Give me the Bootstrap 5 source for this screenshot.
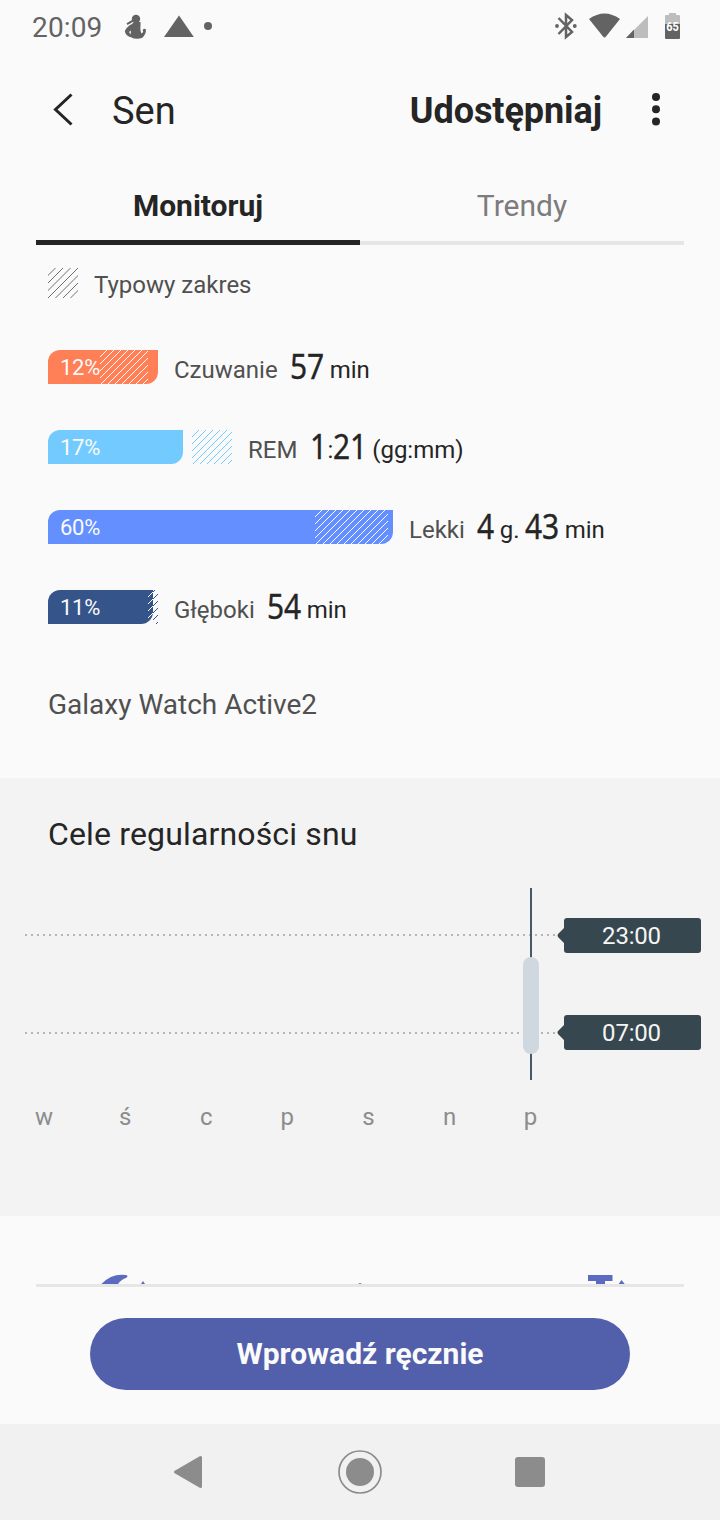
<!DOCTYPE html>
<html lang="pl">
<head>
<meta charset="utf-8">
<meta name="viewport" content="width=device-width, initial-scale=1">
<title>Sen</title>
<link href="https://cdn.jsdelivr.net/npm/bootstrap@5.3.0/dist/css/bootstrap.min.css" rel="stylesheet">
<style>
body{width:720px;height:1520px;overflow:hidden;background:#fafafa;color:#252525;font-family:Roboto,sans-serif;font-size:24px;line-height:40px}
svg{display:block;flex:none}
.status-row{height:54px;padding-left:32px;font-size:28px;color:#636363}
.status-row span{width:71px;padding-top:2px;letter-spacing:.15px}
.app-head{height:114px;padding:0 60px 2px 52px}
.app-title{font-size:38px;margin-left:38px;padding-top:2px}
.app-share{font-size:36px;font-weight:700;padding-top:2px;letter-spacing:-.08px}
.tab-row{height:77px;margin:0 36px;font-size:30px}
.tab-row .nav-link{padding:0;height:77px;line-height:75px;color:#7c7c7c;border-radius:0;box-shadow:inset 0 -4px #e6e6e6}
.tab-row .nav-link.active{color:#252525;font-weight:700;box-shadow:inset 0 -5px #252525}
.stage-panel{height:533px;padding:23px 48px 0}
.legend-row{height:30px;margin-bottom:52px;color:#505050}
.stage{height:34px;margin-bottom:46px}
.stage-graph{position:relative;height:34px;flex:none}
.stage-bar{height:34px;border-radius:12px 0;padding-left:12px;color:#fafafa;font-size:22px;line-height:35px;letter-spacing:-.3px}
.stage-graph svg{position:absolute;top:0}
.stage-text{margin-left:16px;height:34px;white-space:nowrap}
.stage-name{color:#505050;margin-right:12px}
.num{display:inline-block;font-family:"Noto Sans",sans-serif;font-size:34px;line-height:30px;transform:translateY(1px) scaleX(.88);transform-origin:0 50%;-webkit-text-stroke:.35px}
.n1{width:17px}.n2{width:34px}
.device{font-size:28px;color:#505050;margin-top:61px}
.goal-panel{height:438px;background:#f3f3f3;padding-top:36px}
.goal-panel h2{font-size:32px;line-height:40px;font-weight:400;margin:0 48px 34px;letter-spacing:.15px}
.goal-tag{width:145px;height:35px;padding-left:4px;text-align:center;line-height:36px;color:#f5f5f5;background:#37474f;letter-spacing:-.2px;clip-path:path("M10 0H141Q144 0 144 3V32Q144 35 141 35H10Q7 35 7 32V25L1 19Q0 17.500 1 16L7 10V3Q7 0 10 0Z")}
.days{padding-left:3.500px;color:#8c8c8c;margin-top:17px}
.days span{width:81.100px;text-align:center}
.peek{height:68px;padding-top:56px}
.foot{height:140px}
.foot hr{margin:0 36px 31px;border:0;height:3px;background:#e6e6e6;opacity:1}
.btn-enter,.btn-enter:hover{width:540px;height:72px;padding:0;border:0;background:#525fab;color:#fafafa;font-size:30px;font-weight:700;line-height:72px}
.sys-nav{height:96px;background:#f1f1f1}
</style>
</head>
<body>
<div class="status-row d-flex align-items-center">
  <span>20:09</span>
  <svg width="117" height="54" viewBox="103 0 117 54" fill="#636363"><circle cx="136" cy="19" r="4.200"/><path d="M126.500 23.200L132 20l2 1.200-6.500 3.800z"/><path fill-rule="evenodd" d="M132 24Q126 27 124.800 31.500 126 36 131 37.300 134 39 138 38.800L142 38Q146 35 146 29.500 144 28 142.700 30 144 32 141.500 33.500 140 31 140.500 25.500V22H134ZM129 32L130.800 30.500V34.500Z"/><path d="M179 15.500L193.800 37H164z"/><circle cx="208" cy="26" r="4"/></svg>
  <svg class="ms-auto" width="170" height="54" viewBox="550 0 170 54" fill="#636363"><path d="M558.500 18L572 32l-6 5V15l6 5-13.500 14" fill="none" stroke="#636363" stroke-width="2.500"/><circle cx="557" cy="26" r="1.900"/><circle cx="574.800" cy="26" r="1.900"/><path d="M589 19Q604.500 8 620 19L606 36.500Q604.500 38.500 603 36.500Z"/><path d="M626 38L648 16V38Z" fill="#bdbdbd"/><path d="M626 38L634 29.500V38Z"/><path d="M665 24V16q0-1 1-1h3v-2h7v2h3q1 0 1 1v8z" fill="#bdbdbd"/><path d="M665 24h15v14q0 1-1 1h-13q-1 0-1-1z"/><text x="666.300" y="31.300" font-size="13" font-weight="700" fill="#fff" textLength="12.500" lengthAdjust="spacingAndGlyphs">65</text></svg>
</div>

<header class="app-head d-flex align-items-center">
  <svg width="22" height="36"><path d="M19.500 2.500L3.500 17.500 19.500 32.500" fill="none" stroke="#252525" stroke-width="3"/></svg>
  <div class="app-title">Sen</div>
  <div class="app-share ms-auto">Udostępniaj</div>
  <svg width="8" height="34" style="margin-left:50px" fill="#252525"><circle cx="4" cy="4" r="4"/><circle cx="4" cy="16.300" r="4"/><circle cx="4" cy="28.500" r="4"/></svg>
</header>

<nav class="tab-row nav nav-justified">
  <a class="nav-link active">Monitoruj</a>
  <a class="nav-link">Trendy</a>
</nav>

<main>
<section class="stage-panel">
  <div class="legend-row d-flex align-items-center"><svg width="30" height="30" data-step="7.500" stroke="#707070"></svg><span class="ms-3 pt-1">Typowy zakres</span></div>

  <div class="stage d-flex">
    <div class="stage-graph" style="width:110px"><div class="stage-bar" style="width:110px;background:#ff7f56">12%</div><svg style="left:52px" width="48" height="34" data-step="7" stroke="#fff"></svg></div>
    <div class="stage-text d-flex align-items-baseline"><span class="stage-name">Czuwanie</span><span class="num n2">57</span><span style="margin-left:6px">min</span></div>
  </div>
  <div class="stage d-flex">
    <div class="stage-graph" style="width:184px"><div class="stage-bar" style="width:135px;background:#72caff">17%</div><svg style="left:144px" width="40" height="34" data-step="7" stroke="#72caff"></svg></div>
    <div class="stage-text d-flex align-items-baseline"><span class="stage-name">REM</span><span class="num n1" style="margin-left:1px">1</span><span>:</span><span class="num n2">21</span><span style="margin-left:5px">(gg:mm)</span></div>
  </div>
  <div class="stage d-flex">
    <div class="stage-graph" style="width:345px"><div class="stage-bar" style="width:345px;background:#648fff">60%</div><svg style="left:267px" width="73" height="34" data-step="7" stroke="#fff"></svg></div>
    <div class="stage-text d-flex align-items-baseline"><span class="stage-name">Lekki</span><span class="num n1">4</span><span style="margin:0 5px 0 6px">g.</span><span class="num n2">43</span><span style="margin-left:6px">min</span></div>
  </div>
  <div class="stage d-flex">
    <div class="stage-graph" style="width:110px"><div class="stage-bar" style="width:105px;background:#35558a">11%</div><svg style="left:100px" width="10" height="34" data-step="7" stroke="#35558a"></svg><svg style="left:100px" width="5" height="34" data-step="7" stroke="#fff"></svg></div>
    <div class="stage-text d-flex align-items-baseline"><span class="stage-name">Głęboki</span><span class="num n2">54</span><span style="margin-left:6px">min</span></div>
  </div>
  <div class="device">Galaxy Watch Active2</div>
</section>

<section class="goal-panel">
  <h2>Cele regularności snu</h2>
  <div class="d-flex">
    <svg width="557" height="192" viewBox="0 888 557 192"><path d="M25 935H557M25 1033H557" stroke="#b5b5b5" stroke-width="2" stroke-dasharray="2 4"/><path d="M531 888V1080" stroke="#455a64" stroke-width="2"/><rect x="523" y="957" width="16" height="97" rx="8" fill="#cfd8de"/></svg>
    <div class="d-flex flex-column" style="padding-top:30px;gap:62px"><div class="goal-tag">23:00</div><div class="goal-tag">07:00</div></div>
  </div>
  <div class="days d-flex"><span>w</span><span>ś</span><span>c</span><span>p</span><span>s</span><span>n</span><span>p</span></div>
</section>

<section class="peek"><svg width="720" height="12" viewBox="0 1272 720 12" fill="#5c6bc0"><path d="M100.500 1285Q111 1273 126 1275 129 1276 126 1278 120 1280 117.500 1285ZM141 1284L143 1281 145 1284ZM358 1284L360 1283 362 1284ZM588 1275H612.500V1281H605V1285H596V1281H588ZM618 1285L621.500 1280 625.500 1285Z"/></svg></section>
</main>

<footer class="foot text-center"><hr><button type="button" class="btn btn-enter rounded-pill">Wprowadź ręcznie</button></footer>
<div class="sys-nav"><svg width="720" height="96" viewBox="0 1424 720 96" fill="#8c8c8c"><path d="M175.500 1472L200.500 1457.500V1486.500Z" stroke="#8c8c8c" stroke-width="3" stroke-linejoin="round"/><circle cx="360" cy="1472" r="14"/><circle cx="360" cy="1472" r="21" fill="none" stroke="#8c8c8c" stroke-width="1.700"/><rect x="515" y="1457" width="30" height="30" rx="3"/></svg></div>
<script src="https://cdn.jsdelivr.net/npm/bootstrap@5.3.0/dist/js/bootstrap.bundle.min.js"></script>
<script>
// Diagonal hatching for the typical-range swatches
document.querySelectorAll('svg[data-step]').forEach(s => {
  const w = +s.getAttribute('width'), h = +s.getAttribute('height'), step = +s.dataset.step;
  let d = '';
  for (let x = step; x < w + h; x += step) d += `M${x} 0L${x - h} ${h}`;
  s.innerHTML = `<path d="${d}" fill="none" stroke-width="1"/>`;
});
</script>
</body>
</html>
